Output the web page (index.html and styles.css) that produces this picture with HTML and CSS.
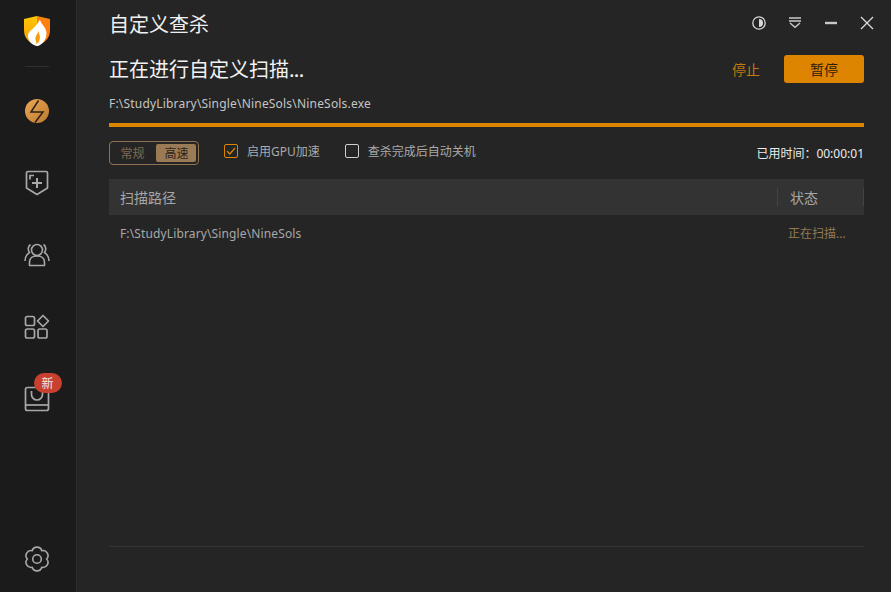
FILE: index.html
```html
<!DOCTYPE html>
<html lang="zh-CN">
<head>
<meta charset="utf-8">
<title>自定义查杀</title>
<link rel="stylesheet" href="styles.css">
</head>
<body>
<div class="app">
  <aside class="sidebar">
    <svg class="logo" width="28" height="32" viewBox="0 0 28 32">
      <defs>
        <linearGradient id="lg" x1="0" y1="0" x2="0" y2="1"><stop offset="0" stop-color="#ffc800"/><stop offset="1" stop-color="#f79a0c"/></linearGradient>
      </defs>
      <path d="M1 4 L14 1 V31 C7 28 1 24 1 15Z" fill="url(#lg)"/>
      <path d="M27 4 L14 1 V31 C21 28 27 24 27 15Z" fill="#ff7f10"/>
      <path d="M17 4 C17 9 24 12 23.500 19 C23 26 18 30.500 14 31 C9 30 5 26 5 21 C5 17 8 15.500 10.500 13 C13 10.500 15.500 8 17 4Z" fill="#fff"/>
      <path d="M15.500 15.500 C15.500 19 18 21 16.500 25 C15.800 27 14.500 28.500 13 29 C14 26.500 12 25.500 12.500 22.500 C13 20 15 18.500 15.500 15.500Z" fill="#f79a0c"/>
    </svg>
    <div class="divider"></div>
    <nav class="nav">
      <a class="nav-item">
        <svg width="26" height="26" viewBox="0 0 26 26"><defs><linearGradient id="bolt" x1="0" y1="0" x2="1" y2="1"><stop offset="0" stop-color="#eba753"/><stop offset="1" stop-color="#bd7a30"/></linearGradient></defs><circle cx="13" cy="13" r="12" fill="url(#bolt)"/><path d="M14.500 2.500 L7 14 H19 L11 24.500" fill="none" stroke="#2a2116" stroke-width="1.500"/></svg>
      </a>
      <a class="nav-item">
        <svg width="24" height="26" viewBox="0 0 24 26" fill="none" stroke="#a8a8a8" stroke-width="1.700"><path d="M3 1.500 H21 A1.500 1.500 0 0 1 22.500 3 V18 L12 24.500 L1.500 18 V3 A1.500 1.500 0 0 1 3 1.500Z" stroke-linejoin="round"/><path d="M5 9.500 V5.500 H9"/><path d="M12 8 V18 M7 13 H17" stroke-width="2"/></svg>
      </a>
      <a class="nav-item">
        <svg width="26" height="26" viewBox="0 0 26 26" fill="none" stroke="#a8a8a8" stroke-width="1.600"><circle cx="13" cy="8" r="5.500"/><path d="M5.500 23.500 V20 C5.500 16 9 14 13 14 C17 14 20.500 16 20.500 20 V23.500 Z" stroke-linejoin="round"/><path d="M6.500 2.500 C4 4 3.500 8 5.500 10.500 C2.500 12.500 1 15 1 19"/><path d="M19.500 2.500 C22 4 22.500 8 20.500 10.500 C23.500 12.500 25 15 25 19"/></svg>
      </a>
      <a class="nav-item">
        <svg width="26" height="26" viewBox="0 0 26 26" fill="none" stroke="#a8a8a8" stroke-width="1.700"><rect x="1.500" y="2.500" width="9" height="9" rx="1.800"/><rect x="1.500" y="15" width="9" height="9" rx="1.800"/><rect x="14" y="15" width="9" height="9" rx="1.800"/><path d="M19 1.500 L24.500 7 L19 12.500 L13.500 7 Z" stroke-linejoin="round"/></svg>
      </a>
      <a class="nav-item nav-new">
        <svg width="26" height="26" viewBox="0 0 26 26" fill="none" stroke="#a8a8a8" stroke-width="1.700"><rect x="1.500" y="1.500" width="23" height="23" rx="2"/><path d="M1.500 19 H24.500"/><path d="M7.500 5 V8.500 A5.500 5.500 0 0 0 18.500 8.500 V5"/></svg>
        <span class="badge">新</span>
      </a>
    </nav>
    <a class="settings">
      <svg width="26" height="26" viewBox="0 0 26 26" fill="none" stroke="#a8a8a8" stroke-width="1.600" stroke-linejoin="round"><path d="M8.200 4.690 A5 5 0 0 1 17.800 4.690 A5 5 0 0 1 22.600 13 A5 5 0 0 1 17.800 21.310 A5 5 0 0 1 8.200 21.310 A5 5 0 0 1 3.400 13 A5 5 0 0 1 8.200 4.690Z"/><circle cx="13" cy="13" r="4.300"/></svg>
    </a>
  </aside>
  <main class="main">
    <header class="titlebar">
      <h1 class="title">自定义查杀</h1>
      <div class="win-controls">
        <svg width="14" height="14" viewBox="0 0 14 14"><circle cx="7" cy="7" r="6.200" fill="none" stroke="#d8d8d8" stroke-width="1.300"/><path d="M7 3 A4 4 0 0 1 7 11Z" fill="#d8d8d8"/></svg>
        <svg width="14" height="14" viewBox="0 0 14 14" fill="none" stroke="#c8c8c8" stroke-width="1.400"><path d="M1 2 H13 M1 5 H13"/><path d="M2 7 L7 11.300 L12 7"/></svg>
        <svg width="14" height="14" viewBox="0 0 14 14"><path d="M1 7 H13" stroke="#c8c8c8" stroke-width="2.400"/></svg>
        <svg width="14" height="14" viewBox="0 0 14 14"><path d="M1 1 L13 13 M13 1 L1 13" stroke="#dcdcdc" stroke-width="1.300"/></svg>
      </div>
    </header>
    <section class="scan-head">
      <h2 class="scan-title">正在进行自定义扫描<span class="dots">...</span></h2>
      <div class="scan-actions">
        <button class="btn-stop">停止</button>
        <button class="btn-pause">暂停</button>
      </div>
    </section>
    <p class="current-file">F:\StudyLibrary\Single\NineSols\NineSols.exe</p>
    <div class="progress"><div class="progress-fill"></div></div>
    <section class="options">
      <div class="speed">
        <span class="speed-item">常规</span>
        <span class="speed-item speed-on">高速</span>
      </div>
      <label class="check"><span class="box box-on"><svg width="10" height="8" viewBox="0 0 10 8"><path d="M1 4 L3.800 7 L9 1" fill="none" stroke="#dd8500" stroke-width="1.200"/></svg></span>启用GPU加速</label>
      <label class="check"><span class="box"></span>查杀完成后自动关机</label>
      <span class="elapsed">已用时间：00:00:01</span>
    </section>
    <section class="table">
      <div class="thead">
        <span class="col-path">扫描路径</span>
        <span class="col-status">状态</span>
      </div>
      <div class="row">
        <span class="col-path">F:\StudyLibrary\Single\NineSols</span>
        <span class="col-status status-run">正在扫描...</span>
      </div>
    </section>
    <div class="foot-rule"></div>
  </main>
</div>
</body>
</html>
```
FILE: styles.css
```css
* { box-sizing: border-box; }
html, body { margin: 0; height: 100%; }
body {
  background: #252525;
  color: #ccc;
  font-family: "Noto Sans", "Noto Sans CJK SC", sans-serif;
  font-size: 12px;
  overflow: hidden;
}
.app { display: flex; width: 891px; height: 592px; }
.sidebar {
  width: 77px;
  flex: none;
  background: #1b1b1b;
  border-right: 1px solid #2e2e2e;
  display: flex;
  flex-direction: column;
  align-items: center;
  padding: 15px 3px 0 0;
}
.logo { display: block; }
.divider { width: 24px; height: 1px; background: #303030; margin-top: 19px; }
.nav { display: flex; flex-direction: column; align-items: center; margin-top: 31px; gap: 46px; }
.nav-item { display: block; position: relative; height: 26px; }
.nav-item svg { display: block; }
.badge {
  position: absolute;
  left: 10px;
  top: -13px;
  width: 28px;
  height: 20px;
  border-radius: 10px;
  background: #c8412f;
  color: #f2e8e6;
  font-size: 12px;
  line-height: 20px;
  text-align: center;
  font-family: "Noto Sans CJK SC", sans-serif;
}
.settings { margin-top: auto; margin-bottom: 20px; height: 26px; }
.settings svg { display: block; }
.main { flex: 1; min-width: 0; padding: 0 27px 0 32px; display: flex; flex-direction: column; }
.titlebar { display: flex; align-items: center; justify-content: space-between; height: 48px; }
.title { margin: 0; font-size: 20px; font-weight: 400; color: #f0f0f0; line-height: 28px; font-family: "Noto Sans CJK SC", sans-serif; }
.win-controls { display: flex; gap: 22px; margin: 0 -10px 2px 0; }
.win-controls svg { display: block; }
.scan-head { display: flex; align-items: center; justify-content: space-between; height: 42px; }
.scan-title { margin: 0; font-size: 20px; font-weight: 400; color: #f2f2f2; line-height: 28px; font-family: "Noto Sans CJK SC", sans-serif; }
.dots { letter-spacing: -0.7px; }
.scan-actions { display: flex; align-items: center; gap: 24px; }
button { font-family: "Noto Sans CJK SC", sans-serif; font-size: 14px; border: 0; padding: 0; background: none; cursor: pointer; }
.btn-stop { color: #c27a12; width: 28px; }
.btn-pause { width: 80px; height: 28px; background: #dd8500; color: #2a2008; border-radius: 3px; }
.current-file { margin: 5px 0 0; height: 18px; line-height: 18px; font-size: 12px; color: #c4c4c4; letter-spacing: 0.19px; }
.progress { height: 4px; margin-top: 10px; background: #333; }
.progress-fill { height: 100%; width: 100%; background: #dd8500; }
.options { display: flex; align-items: center; height: 52px; }
.speed {
  display: flex;
  align-items: center;
  width: 90px;
  height: 24px;
  padding: 2px;
  border: 1px solid #8f7252;
  border-radius: 4px;
}
.speed-item { flex: 1; height: 18px; line-height: 18px; text-align: center; color: #806a4f; font-family: "Noto Sans CJK SC", sans-serif; padding-right: 3px; }
.speed-on { flex: none; width: 40px; background: #9b7b55; color: #2c2318; border-radius: 2px; padding: 0 0 0 1px; }
.check { display: flex; align-items: center; margin: 0 0 4px 25px; color: #aaa; font-size: 12px; }
.box { width: 14px; height: 14px; margin-right: 9px; border: 1px solid #cfcfcf; border-radius: 2px; display: flex; align-items: center; justify-content: center; }
.box-on { border-color: #dd8500; }
.elapsed { margin-left: auto; color: #ececec; font-size: 12px; }
.table { display: flex; flex-direction: column; }
.thead { display: flex; align-items: center; justify-content: space-between; height: 36px; background: #333; color: #a6a6a6; font-size: 14px; font-family: "Noto Sans CJK SC", sans-serif; }
.thead .col-path { padding-left: 11px; flex: 1; }
.thead .col-status { width: 87px; height: 18px; line-height: 18px; padding-left: 12px; border-left: 1px solid #444; border-right: 1px solid #444; }
.row { display: flex; align-items: center; justify-content: space-between; height: 36px; color: #a8a8a8; font-size: 12px; }
.row .col-path { padding-left: 11px; flex: 1; letter-spacing: 0.13px; }
.row .col-status { width: 76px; }
.status-run { color: #967852; }
.foot-rule { margin-top: auto; margin-bottom: 45px; height: 1px; background: #343434; }
```
